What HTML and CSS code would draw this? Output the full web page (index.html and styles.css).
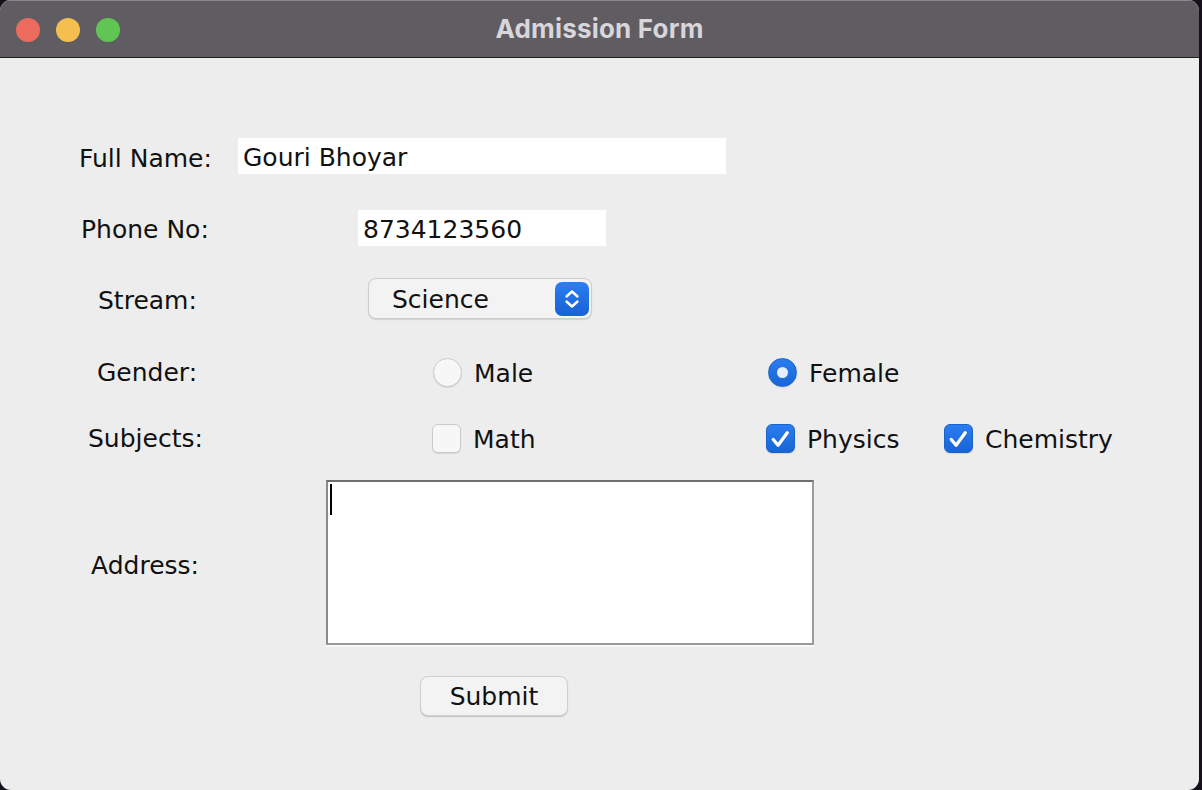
FILE: index.html
```html
<!DOCTYPE html>
<html lang="en">
<head>
<meta charset="utf-8">
<title>Admission Form</title>
<link rel="stylesheet" href="styles.css">
</head>
<body>
<div class="window">
  <header class="titlebar">
    <div class="lights">
      <span class="light light-red"></span>
      <span class="light light-yellow"></span>
      <span class="light light-green"></span>
    </div>
    <h1 class="title">Admission Form</h1>
    <div class="spacer"></div>
  </header>
  <main class="content">
    <div class="row row-name">
      <label class="label label-name">Full Name:</label>
      <input class="field field-name" type="text" value="Gouri Bhoyar">
    </div>
    <div class="row row-phone">
      <label class="label label-phone">Phone No:</label>
      <input class="field field-phone" type="text" value="8734123560">
    </div>
    <div class="row row-stream">
      <label class="label label-stream">Stream:</label>
      <div class="combo">
        <span class="combo-text">Science</span>
        <span class="combo-arrows">
          <svg width="34" height="34" viewBox="0 0 34 34"><path d="M11.5 14.5 L17 9.5 L22.5 14.5 M11.5 19.5 L17 24.5 L22.5 19.5" fill="none" stroke="#fff" stroke-width="2.4" stroke-linecap="round" stroke-linejoin="round"/></svg>
        </span>
      </div>
    </div>
    <div class="row row-gender">
      <label class="label label-gender">Gender:</label>
      <div class="option option-male"><span class="radio"></span><span class="opt-text">Male</span></div>
      <div class="option"><span class="radio radio-on"><span class="radio-dot"></span></span><span class="opt-text">Female</span></div>
    </div>
    <div class="row row-subjects">
      <label class="label label-subjects">Subjects:</label>
      <div class="option option-math"><span class="check"></span><span class="opt-text">Math</span></div>
      <div class="option option-physics"><span class="check check-on"><svg width="28" height="28" viewBox="0 0 28 28"><path d="M6.5 14.5 L11.5 20.5 L21 7.5" fill="none" stroke="#fff" stroke-width="3.4" stroke-linecap="round" stroke-linejoin="round"/></svg></span><span class="opt-text">Physics</span></div>
      <div class="option"><span class="check check-on"><svg width="28" height="28" viewBox="0 0 28 28"><path d="M6.5 14.5 L11.5 20.5 L21 7.5" fill="none" stroke="#fff" stroke-width="3.4" stroke-linecap="round" stroke-linejoin="round"/></svg></span><span class="opt-text">Chemistry</span></div>
    </div>
    <div class="row row-address">
      <label class="label label-address">Address:</label>
      <div class="textarea"><span class="caret"></span></div>
    </div>
    <div class="row row-submit">
      <button class="button" type="button">Submit</button>
    </div>
  </main>
</div>
</body>
</html>
```

FILE: styles.css
```css
* { box-sizing: border-box; }

html, body {
  margin: 0;
  padding: 0;
}

body {
  width: 1202px;
  height: 790px;
  background: #15111c;
  font-family: "DejaVu Sans", "Liberation Sans", sans-serif;
  overflow: hidden;
}

.window {
  width: 1199px;
  height: 790px;
  border-radius: 11px;
  overflow: hidden;
  background: #ededed;
  display: flex;
  flex-direction: column;
}

.titlebar {
  height: 58px;
  flex: none;
  background: #5f5d62;
  border-top: 1px solid #8a888d;
  border-bottom: 1px solid #1e1e1e;
  display: grid;
  grid-template-columns: 1fr auto 1fr;
  align-items: center;
}

.lights {
  display: flex;
  gap: 16px;
  padding-left: 16px;
  padding-top: 1px;
}

.light {
  width: 24px;
  height: 24px;
  border-radius: 50%;
}
.light-red { background: #ed6a5e; }
.light-yellow { background: #f4bf4f; }
.light-green { background: #61c554; }

.title {
  margin: 0;
  padding-bottom: 2px;
  font-family: Inter, "DejaVu Sans", sans-serif;
  font-weight: 700;
  font-size: 26px;
  color: #d8d6da;
  letter-spacing: 0.2px;
}

.content {
  flex: 1;
  display: flex;
  flex-direction: column;
  padding-top: 80px;
  font-size: 25px;
  color: #111;
}

.row {
  display: flex;
  align-items: center;
  flex: none;
}
.row-name { height: 36px; }
.row-phone { height: 36px; margin-top: 36px; }
.row-stream { height: 41px; margin-top: 32px; }
.row-gender { height: 30px; margin-top: 38px; }
.row-subjects { height: 30px; margin-top: 36px; }
.row-address { height: 165px; margin-top: 27px; }
.row-submit { height: 40px; margin-top: 31px; padding-left: 420px; }

.label {
  flex: none;
  white-space: nowrap;
  padding-top: 4px;
}
.label-name { width: 238px; padding-left: 79px; }
.label-phone { width: 358px; padding-left: 81px; padding-top: 2px; }
.label-stream { width: 368px; padding-left: 98px; }
.label-gender { width: 433px; padding-left: 97px; padding-top: 0; }
.label-subjects { width: 432px; padding-left: 88px; padding-top: 0; }
.label-address { width: 326px; padding-left: 91px; padding-top: 5px; }

.field {
  height: 36px;
  border: none;
  outline: none;
  background: #fff;
  font: inherit;
  color: #111;
  padding: 2px 0 0 5px;
  margin: 0;
}
.field-name { width: 488px; }
.field-phone { width: 248px; }

.combo {
  width: 224px;
  height: 41px;
  border-radius: 8px;
  background: #f3f3f3;
  border: 1px solid #cdcdcd;
  box-shadow: 0 1px 1px rgba(0, 0, 0, 0.12);
  display: flex;
  align-items: center;
  justify-content: space-between;
  padding: 0 2px 0 23px;
}
.combo-text { padding-top: 2px; }

.combo-arrows {
  width: 34px;
  height: 34px;
  border-radius: 7px;
  background: linear-gradient(#2b7ef1, #1762d6);
  display: flex;
}

.option {
  display: flex;
  align-items: center;
  gap: 12px;
  flex: none;
}
.option-male { width: 335px; }
.option-math { width: 334px; }
.option-physics { width: 178px; }

.opt-text { padding-top: 2px; }

.radio {
  width: 29px;
  height: 29px;
  border-radius: 50%;
  background: #f7f7f7;
  border: 1px solid #cbcbcb;
  box-shadow: 0 1px 1px rgba(0, 0, 0, 0.1);
  display: flex;
  align-items: center;
  justify-content: center;
  flex: none;
}
.radio-on {
  background: linear-gradient(#2a7df0, #1865d6);
  border-color: #1a62cc;
}
.radio-dot {
  width: 11px;
  height: 11px;
  border-radius: 50%;
  background: #e6eefb;
}

.check {
  width: 29px;
  height: 29px;
  border-radius: 6px;
  background: #f7f7f7;
  border: 1px solid #cbcbcb;
  box-shadow: 0 1px 1px rgba(0, 0, 0, 0.1);
  display: flex;
  flex: none;
}
.check-on {
  background: linear-gradient(#2a7df0, #1865d6);
  border-color: #1a62cc;
}

.textarea {
  width: 488px;
  height: 165px;
  background: #fff;
  border: 2px solid #9a9a9a;
  border-top-color: #6e6e6e;
  border-left-color: #8a8a8a;
  box-shadow: 0 2px 0 #f8f8f8;
  padding: 2px 0 0 2px;
}
.caret {
  display: block;
  width: 2px;
  height: 31px;
  background: #000;
}

.button {
  width: 148px;
  height: 40px;
  border-radius: 8px;
  background: #f3f3f3;
  border: 1px solid #d0d0d0;
  box-shadow: 0 1px 1px rgba(0, 0, 0, 0.18);
  font: inherit;
  color: #111;
  padding: 0;
  margin: 0;
}
```
